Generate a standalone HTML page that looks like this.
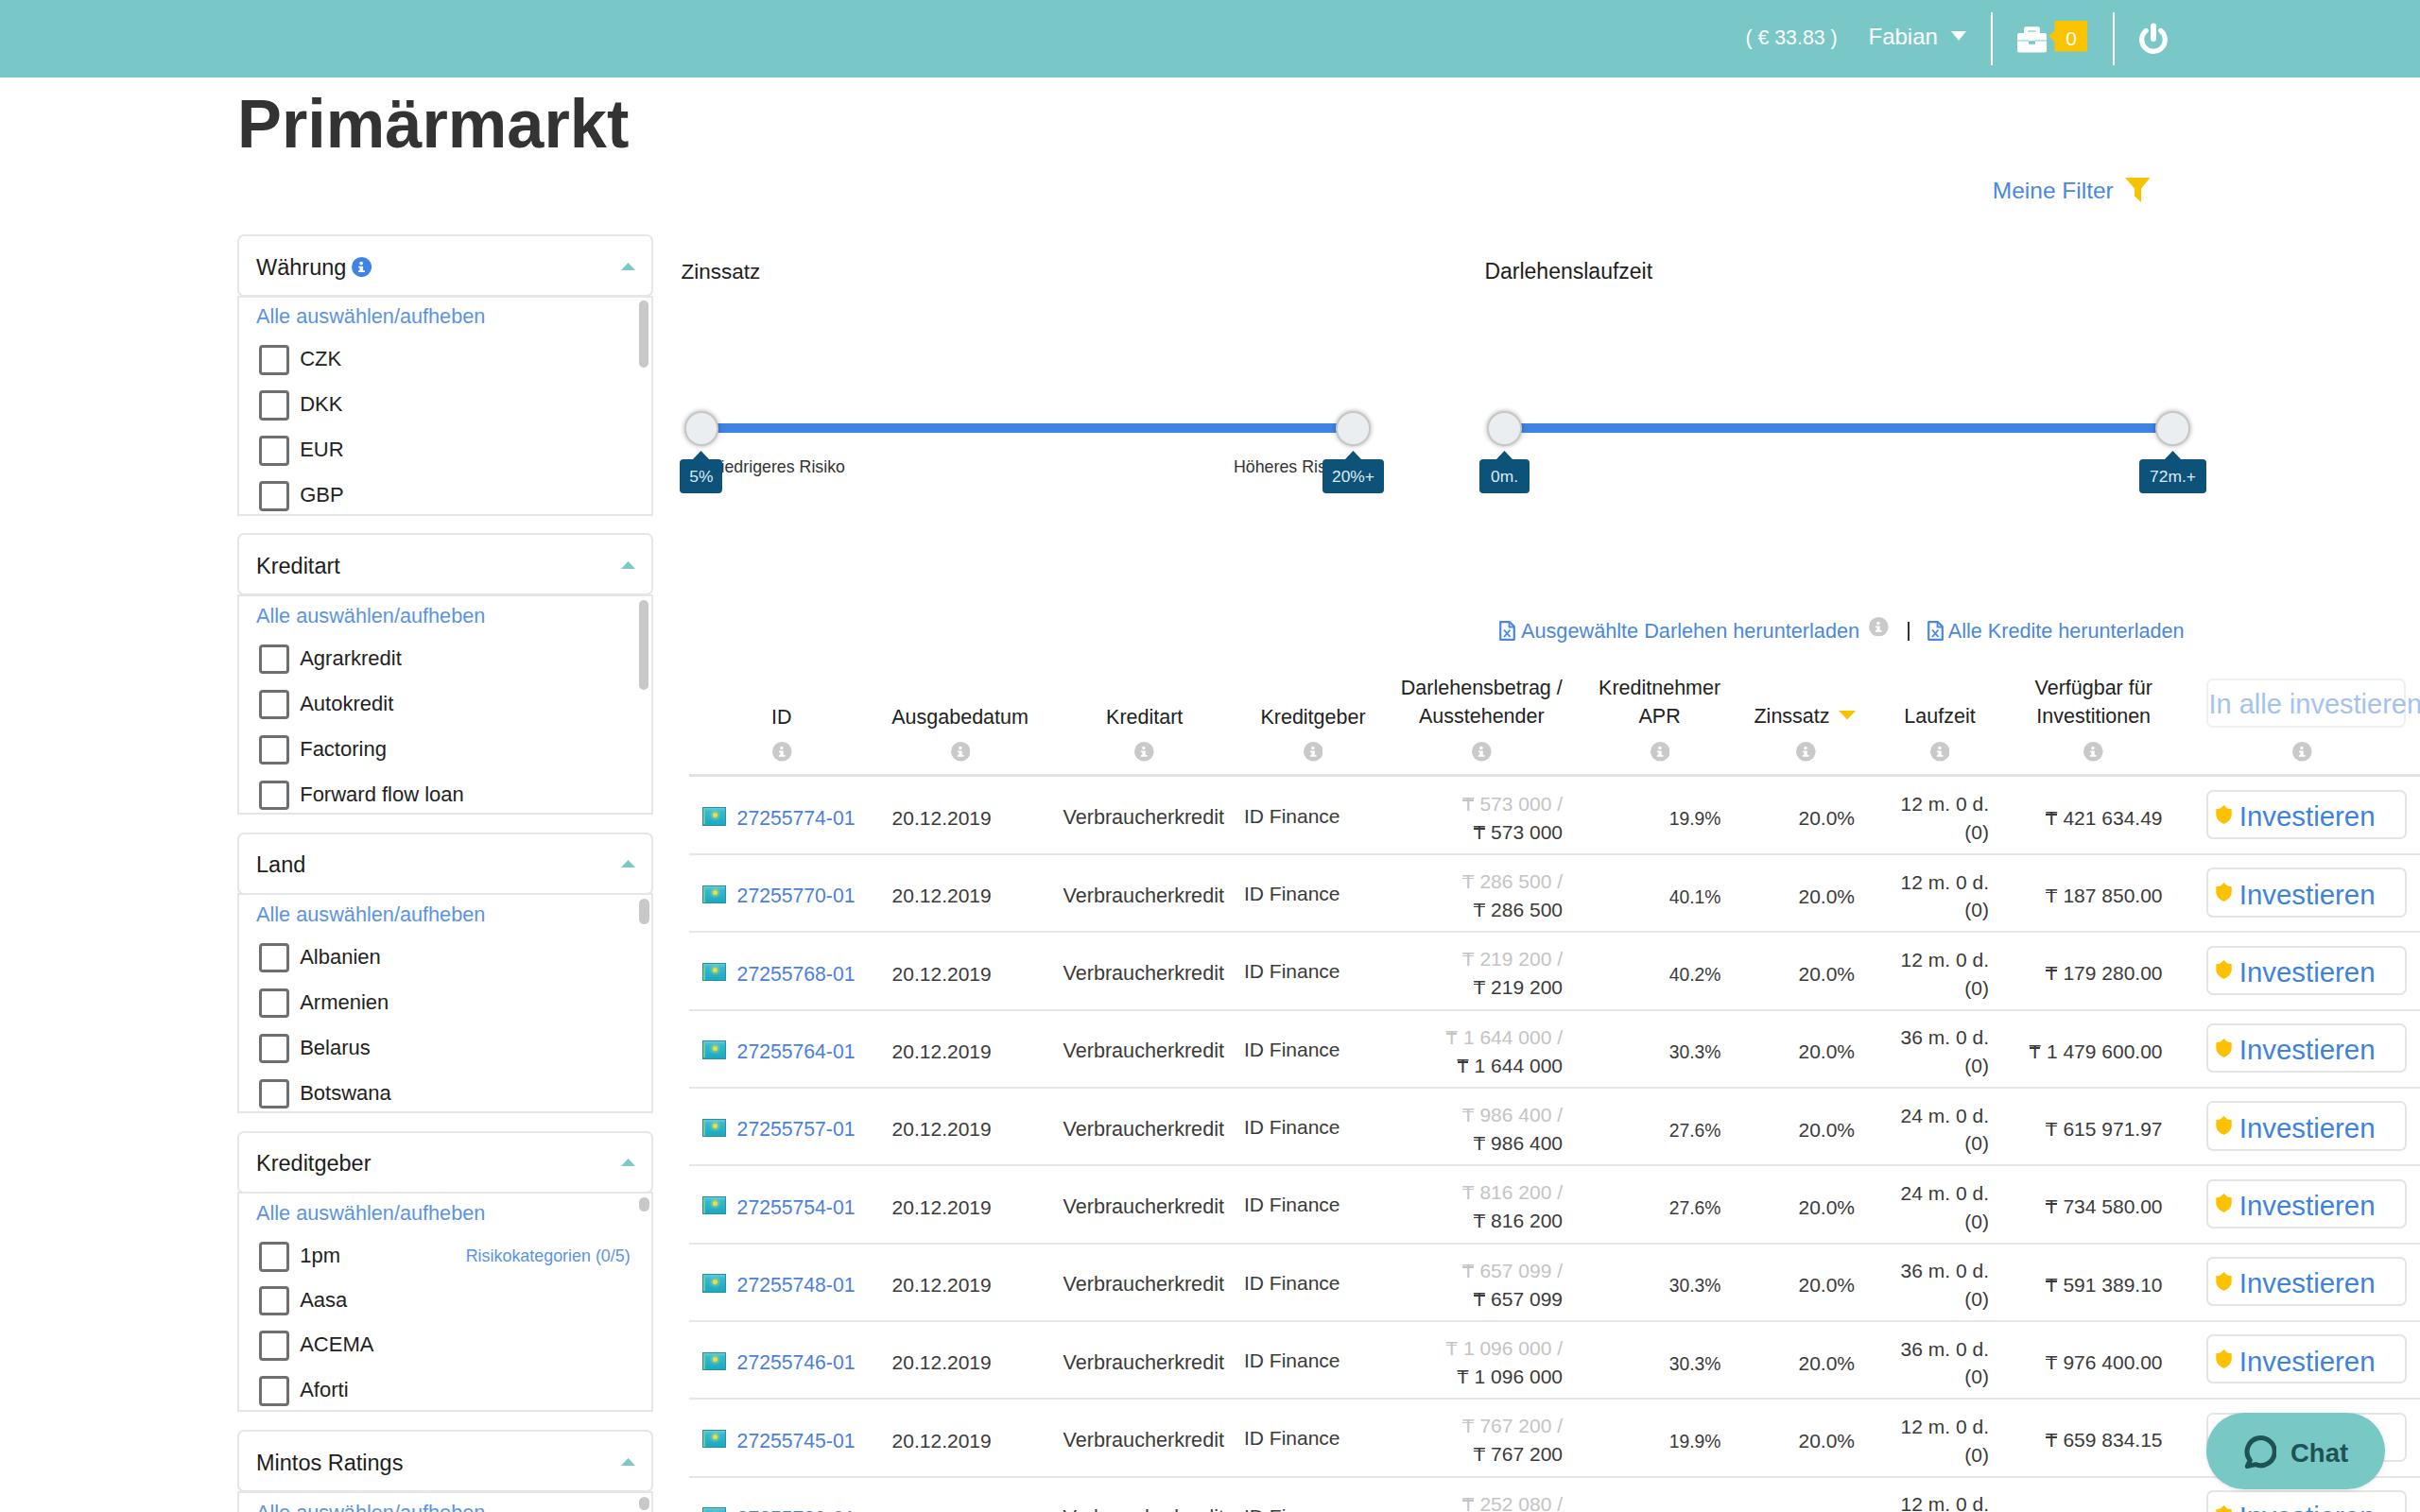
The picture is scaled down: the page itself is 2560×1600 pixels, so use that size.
<!DOCTYPE html>
<html><head><meta charset="utf-8"><title>Primärmarkt</title>
<style>
html,body{margin:0;padding:0;background:#fff;}
body{width:2560px;height:1600px;overflow:hidden;position:relative;font-family:"Liberation Sans",sans-serif;}
.a{position:absolute;}
.t{position:absolute;white-space:nowrap;}
.tg{position:relative;display:inline-block;}
.tg::after{content:"";position:absolute;left:0.03em;right:0.03em;top:0.41em;height:0.07em;background:currentColor;}
.info{position:absolute;width:20.5px;height:20.5px;border-radius:50%;background:#c9c9c9;}
.info::before{content:"";position:absolute;left:8.6px;top:4px;width:3.6px;height:3.6px;border-radius:50%;background:#fff;}
.info::after{content:"";position:absolute;left:8.2px;top:8.8px;width:4.2px;height:7.2px;background:#fff;border-radius:0.5px;}
.info.blue{background:#3f83e5;}
.knob{position:absolute;width:36.6px;height:36.6px;border-radius:50%;background:#ebeef0;box-sizing:border-box;border:2.5px solid #c4c8c8;box-shadow:0 0 4px 1px rgba(0,0,0,0.22);}
.flag{position:absolute;width:24.6px;height:19.6px;box-sizing:border-box;border:1.3px solid #2b8f9c;background:linear-gradient(#66c9e6 0,#33bad2 22%,#1aa8c2 100%);}
.flag::before{content:"";position:absolute;left:0.3px;top:0.5px;width:2px;bottom:0.5px;background:#6fc9a0;}
.flag::after{content:"";position:absolute;left:10px;top:4.6px;width:5px;height:5px;border-radius:50%;background:#eadc4a;box-shadow:0 0 3px 2px rgba(190,215,100,0.6);}
</style></head><body>
<div class="a" style="left:0px;top:0px;width:2560px;height:81.6px;background:#79c8c7;"></div>
<div class="t" style="top:27.22px;font-size:21.3px;line-height:26px;color:#ffffff;left:1846.5px;">( € 33.83 )</div>
<div class="t" style="top:23.68px;font-size:24px;line-height:29px;color:#ffffff;left:1976.5px;">Fabian</div>
<svg class="a" style="left:2064px;top:33px" width="16" height="11" viewBox="0 0 16 11"><path d="M0 0H16L8 10Z" fill="#fff"/></svg>
<div class="a" style="left:2106px;top:12.6px;width:2px;height:56.5px;background:#fff;"></div>
<div class="a" style="left:2235px;top:12.6px;width:2px;height:56.5px;background:#fff;"></div>
<svg class="a" style="left:2133px;top:28px" width="33" height="28" viewBox="0 0 33 28">
<path d="M8 7.5V2.5Q8 0.2 10.3 0.2H22.7Q25 0.2 25 2.5V7.5Z" fill="#fff"/><path d="M12.3 4.4H20.7V5.6H12.3Z" fill="#79c8c7"/>
<path d="M3 7H30Q32 7 32 9V14.4H20V15.2H13V14.4H1V9Q1 7 3 7Z" fill="#fff"/>
<path d="M1 15.5H13V18.8H20V15.5H32V25.5Q32 27.5 30 27.5H3Q1 27.5 1 25.5Z" fill="#fff"/>
</svg>
<svg class="a" style="left:2167px;top:21.7px" width="42" height="33" viewBox="0 0 42 33"><path d="M6.5 0H41V32.6H6.5V22L0 16.3L6.5 10.6Z" fill="#fcc400"/></svg>
<div class="t" style="top:28.22px;font-size:21px;line-height:25px;color:#ffffff;left:2191px;transform:translateX(-50%);">0</div>
<svg class="a" style="left:2260px;top:22px" width="36" height="36" viewBox="0 0 36 36">
<path d="M10.2 10.5A12.3 12.3 0 1 0 25.8 10.5" fill="none" stroke="#fff" stroke-width="5.2" stroke-linecap="round"/>
<path d="M18 5.5V19" stroke="#fff" stroke-width="6" stroke-linecap="round"/>
</svg>
<div class="t" style="top:86.76px;font-size:73.1px;line-height:88px;color:#333333;font-weight:700;left:250.5px;transform:scaleX(0.962);transform-origin:left top;">Primärmarkt</div>
<div class="t" style="top:187.31px;font-size:24.5px;line-height:29px;color:#4a87dd;left:2107.8px;">Meine Filter</div>
<svg class="a" style="left:2248px;top:188px" width="27" height="27" viewBox="0 0 27 27"><path d="M0 0H26.5L17 11.5V26L10 19.5V11.5Z" fill="#f6c300"/></svg>
<div class="a" style="left:251px;top:248px;width:440px;height:66px;border:2px solid #e6e6e6;border-radius:7px;box-sizing:border-box;"></div>
<div class="a" style="left:251px;top:312.5px;width:440px;height:233px;border:2px solid #e6e6e6;border-top-width:2px;box-sizing:border-box;background:#fff;"></div>
<div class="t" style="top:268.55px;font-size:23.5px;line-height:28px;color:#1d1d1d;left:271px;">Währung</div>
<svg class="a" style="left:371.50px;top:272.20px" width="21.1" height="21.1" viewBox="0 0 20.6 20.6"><circle cx="10.3" cy="10.3" r="10.3" fill="#3f83e8"/><circle cx="9.9" cy="6.5" r="1.75" fill="#fff"/><path d="M6.9 9.5H11.8V14H13.6V15.7H6.9V14H8.3V11H6.9Z" fill="#fff"/></svg>
<svg class="a" style="left:657px;top:277.5px" width="15" height="8" viewBox="0 0 15 8"><path d="M0 8L7.5 0L15 8Z" fill="#7cc8c6"/></svg>
<div class="t" style="top:322.48px;font-size:21.7px;line-height:26px;color:#5b93e3;left:271px;">Alle auswählen/aufheben</div>
<div class="a" style="left:675.5px;top:318.3px;width:10.5px;height:70.6px;background:#c8c8c8;border-radius:6px;"></div>
<div class="a" style="left:274px;top:365.3px;width:31.5px;height:31.5px;border:3px solid #6f6f6f;border-radius:4px;box-sizing:border-box;"></div>
<div class="t" style="top:367.47px;font-size:22px;line-height:26px;color:#222222;left:317.2px;">CZK</div>
<div class="a" style="left:274px;top:413.3px;width:31.5px;height:31.5px;border:3px solid #6f6f6f;border-radius:4px;box-sizing:border-box;"></div>
<div class="t" style="top:415.47px;font-size:22px;line-height:26px;color:#222222;left:317.2px;">DKK</div>
<div class="a" style="left:274px;top:461.3px;width:31.5px;height:31.5px;border:3px solid #6f6f6f;border-radius:4px;box-sizing:border-box;"></div>
<div class="t" style="top:463.47px;font-size:22px;line-height:26px;color:#222222;left:317.2px;">EUR</div>
<div class="a" style="left:274px;top:509.3px;width:31.5px;height:31.5px;border:3px solid #6f6f6f;border-radius:4px;box-sizing:border-box;"></div>
<div class="t" style="top:511.47px;font-size:22px;line-height:26px;color:#222222;left:317.2px;">GBP</div>
<div class="a" style="left:251px;top:564.3px;width:440px;height:66px;border:2px solid #e6e6e6;border-radius:7px;box-sizing:border-box;"></div>
<div class="a" style="left:251px;top:628.8px;width:440px;height:233px;border:2px solid #e6e6e6;border-top-width:2px;box-sizing:border-box;background:#fff;"></div>
<div class="t" style="top:584.85px;font-size:23.5px;line-height:28px;color:#1d1d1d;left:271px;">Kreditart</div>
<svg class="a" style="left:657px;top:593.8px" width="15" height="8" viewBox="0 0 15 8"><path d="M0 8L7.5 0L15 8Z" fill="#7cc8c6"/></svg>
<div class="t" style="top:638.78px;font-size:21.7px;line-height:26px;color:#5b93e3;left:271px;">Alle auswählen/aufheben</div>
<div class="a" style="left:675.5px;top:634.6999999999999px;width:10.5px;height:95.6px;background:#c8c8c8;border-radius:6px;"></div>
<div class="a" style="left:274px;top:681.5999999999999px;width:31.5px;height:31.5px;border:3px solid #6f6f6f;border-radius:4px;box-sizing:border-box;"></div>
<div class="t" style="top:683.77px;font-size:22px;line-height:26px;color:#222222;left:317.2px;">Agrarkredit</div>
<div class="a" style="left:274px;top:729.5999999999999px;width:31.5px;height:31.5px;border:3px solid #6f6f6f;border-radius:4px;box-sizing:border-box;"></div>
<div class="t" style="top:731.77px;font-size:22px;line-height:26px;color:#222222;left:317.2px;">Autokredit</div>
<div class="a" style="left:274px;top:777.5999999999999px;width:31.5px;height:31.5px;border:3px solid #6f6f6f;border-radius:4px;box-sizing:border-box;"></div>
<div class="t" style="top:779.77px;font-size:22px;line-height:26px;color:#222222;left:317.2px;">Factoring</div>
<div class="a" style="left:274px;top:825.5999999999999px;width:31.5px;height:31.5px;border:3px solid #6f6f6f;border-radius:4px;box-sizing:border-box;"></div>
<div class="t" style="top:827.77px;font-size:22px;line-height:26px;color:#222222;left:317.2px;">Forward flow loan</div>
<div class="a" style="left:251px;top:880.6px;width:440px;height:66px;border:2px solid #e6e6e6;border-radius:7px;box-sizing:border-box;"></div>
<div class="a" style="left:251px;top:945.1px;width:440px;height:233px;border:2px solid #e6e6e6;border-top-width:2px;box-sizing:border-box;background:#fff;"></div>
<div class="t" style="top:901.15px;font-size:23.5px;line-height:28px;color:#1d1d1d;left:271px;">Land</div>
<svg class="a" style="left:657px;top:910.1px" width="15" height="8" viewBox="0 0 15 8"><path d="M0 8L7.5 0L15 8Z" fill="#7cc8c6"/></svg>
<div class="t" style="top:955.08px;font-size:21.7px;line-height:26px;color:#5b93e3;left:271px;">Alle auswählen/aufheben</div>
<div class="a" style="left:675.5px;top:951.3000000000001px;width:11px;height:27px;background:#c8c8c8;border-radius:6px;"></div>
<div class="a" style="left:274px;top:997.9px;width:31.5px;height:31.5px;border:3px solid #6f6f6f;border-radius:4px;box-sizing:border-box;"></div>
<div class="t" style="top:1000.07px;font-size:22px;line-height:26px;color:#222222;left:317.2px;">Albanien</div>
<div class="a" style="left:274px;top:1045.9px;width:31.5px;height:31.5px;border:3px solid #6f6f6f;border-radius:4px;box-sizing:border-box;"></div>
<div class="t" style="top:1048.07px;font-size:22px;line-height:26px;color:#222222;left:317.2px;">Armenien</div>
<div class="a" style="left:274px;top:1093.9px;width:31.5px;height:31.5px;border:3px solid #6f6f6f;border-radius:4px;box-sizing:border-box;"></div>
<div class="t" style="top:1096.07px;font-size:22px;line-height:26px;color:#222222;left:317.2px;">Belarus</div>
<div class="a" style="left:274px;top:1141.9px;width:31.5px;height:31.5px;border:3px solid #6f6f6f;border-radius:4px;box-sizing:border-box;"></div>
<div class="t" style="top:1144.07px;font-size:22px;line-height:26px;color:#222222;left:317.2px;">Botswana</div>
<div class="a" style="left:251px;top:1196.9px;width:440px;height:66px;border:2px solid #e6e6e6;border-radius:7px;box-sizing:border-box;"></div>
<div class="a" style="left:251px;top:1261.4px;width:440px;height:233px;border:2px solid #e6e6e6;border-top-width:2px;box-sizing:border-box;background:#fff;"></div>
<div class="t" style="top:1217.45px;font-size:23.5px;line-height:28px;color:#1d1d1d;left:271px;">Kreditgeber</div>
<svg class="a" style="left:657px;top:1226.4px" width="15" height="8" viewBox="0 0 15 8"><path d="M0 8L7.5 0L15 8Z" fill="#7cc8c6"/></svg>
<div class="t" style="top:1271.38px;font-size:21.7px;line-height:26px;color:#5b93e3;left:271px;">Alle auswählen/aufheben</div>
<div class="a" style="left:675.5px;top:1267.4px;width:11px;height:14.5px;background:#c8c8c8;border-radius:6px;"></div>
<div class="a" style="left:274px;top:1314.2px;width:31.5px;height:31.5px;border:3px solid #6f6f6f;border-radius:4px;box-sizing:border-box;"></div>
<div class="t" style="top:1316.37px;font-size:22px;line-height:26px;color:#222222;left:317.2px;">1pm</div>
<div class="a" style="left:274px;top:1360.5px;width:31.5px;height:31.5px;border:3px solid #6f6f6f;border-radius:4px;box-sizing:border-box;"></div>
<div class="t" style="top:1362.67px;font-size:22px;line-height:26px;color:#222222;left:317.2px;">Aasa</div>
<div class="a" style="left:274px;top:1408.1000000000001px;width:31.5px;height:31.5px;border:3px solid #6f6f6f;border-radius:4px;box-sizing:border-box;"></div>
<div class="t" style="top:1410.27px;font-size:22px;line-height:26px;color:#222222;left:317.2px;">ACEMA</div>
<div class="a" style="left:274px;top:1456.3px;width:31.5px;height:31.5px;border:3px solid #6f6f6f;border-radius:4px;box-sizing:border-box;"></div>
<div class="t" style="top:1458.47px;font-size:22px;line-height:26px;color:#222222;left:317.2px;">Aforti</div>
<div class="t" style="top:1318.89px;font-size:17.9px;line-height:21px;color:#5b93e3;right:1893.3px;">Risikokategorien (0/5)</div>
<div class="a" style="left:251px;top:1513.2px;width:440px;height:66px;border:2px solid #e6e6e6;border-radius:7px;box-sizing:border-box;"></div>
<div class="a" style="left:251px;top:1577.7px;width:440px;height:233px;border:2px solid #e6e6e6;border-top-width:2px;box-sizing:border-box;background:#fff;"></div>
<div class="t" style="top:1533.75px;font-size:23.5px;line-height:28px;color:#1d1d1d;left:271px;">Mintos Ratings</div>
<svg class="a" style="left:657px;top:1542.7px" width="15" height="8" viewBox="0 0 15 8"><path d="M0 8L7.5 0L15 8Z" fill="#7cc8c6"/></svg>
<div class="t" style="top:1587.68px;font-size:21.7px;line-height:26px;color:#5b93e3;left:271px;">Alle auswählen/aufheben</div>
<div class="a" style="left:675.5px;top:1583.7px;width:11px;height:14.5px;background:#c8c8c8;border-radius:6px;"></div>
<div class="t" style="top:274.00px;font-size:22.5px;line-height:27px;color:#1d1d1d;left:720.5px;">Zinssatz</div>
<div class="t" style="top:273.33px;font-size:23px;line-height:28px;color:#1d1d1d;left:1570.4px;">Darlehenslaufzeit</div>
<div class="t" style="top:484.33px;font-size:17.8px;line-height:21px;color:#333333;left:749.7px;">Niedrigeres Risiko</div>
<div class="t" style="top:484.33px;font-size:17.8px;line-height:21px;color:#333333;left:1305px;">Höheres Risiko</div>
<div class="a" style="left:741.8px;top:448px;width:689.7px;height:10px;background:#3f83e5;"></div>
<div class="knob" style="left:723.5px;top:435.3px"></div>
<svg class="a" style="left:733.3px;top:477px" width="17" height="9" viewBox="0 0 17 9"><path d="M0 9L8.5 0L17 9Z" fill="#0d5279"/></svg>
<div class="a" style="left:719.4px;top:485.5px;width:44.8px;height:36.4px;background:#0d5279;border-radius:4px;"></div>
<div class="t" style="top:494.27px;font-size:17.4px;line-height:21px;color:#dcebf7;left:741.8px;transform:translateX(-50%);">5%</div>
<div class="knob" style="left:1413.2px;top:435.3px"></div>
<svg class="a" style="left:1423.0px;top:477px" width="17" height="9" viewBox="0 0 17 9"><path d="M0 9L8.5 0L17 9Z" fill="#0d5279"/></svg>
<div class="a" style="left:1398.7px;top:485.5px;width:65.6px;height:36.4px;background:#0d5279;border-radius:4px;"></div>
<div class="t" style="top:494.27px;font-size:17.4px;line-height:21px;color:#dcebf7;left:1431.5px;transform:translateX(-50%);">20%+</div>
<div class="a" style="left:1591.5px;top:448px;width:707.0px;height:10px;background:#3f83e5;"></div>
<div class="knob" style="left:1573.2px;top:435.3px"></div>
<svg class="a" style="left:1583.0px;top:477px" width="17" height="9" viewBox="0 0 17 9"><path d="M0 9L8.5 0L17 9Z" fill="#0d5279"/></svg>
<div class="a" style="left:1564.65px;top:485.5px;width:53.7px;height:36.4px;background:#0d5279;border-radius:4px;"></div>
<div class="t" style="top:494.27px;font-size:17.4px;line-height:21px;color:#dcebf7;left:1591.5px;transform:translateX(-50%);">0m.</div>
<div class="knob" style="left:2280.2px;top:435.3px"></div>
<svg class="a" style="left:2290.0px;top:477px" width="17" height="9" viewBox="0 0 17 9"><path d="M0 9L8.5 0L17 9Z" fill="#0d5279"/></svg>
<div class="a" style="left:2263.15px;top:485.5px;width:70.7px;height:36.4px;background:#0d5279;border-radius:4px;"></div>
<div class="t" style="top:494.27px;font-size:17.4px;line-height:21px;color:#dcebf7;left:2298.5px;transform:translateX(-50%);">72m.+</div>
<svg class="a" style="left:1586px;top:656.5px" width="17" height="21" viewBox="0 0 17 21">
<path d="M1.2 1.2H11L15.8 6V19.8H1.2Z" fill="none" stroke="#4a87dd" stroke-width="2.2" stroke-linejoin="round"/>
<path d="M10.5 1.5V6.5H15.5" fill="none" stroke="#4a87dd" stroke-width="1.8"/>
<path d="M5 9.5L11.5 17M11.5 9.5L5 17" stroke="#4a87dd" stroke-width="1.9"/></svg>
<div class="t" style="top:654.88px;font-size:21.7px;line-height:26px;color:#4a87dd;left:1609px;">Ausgewählte Darlehen herunterladen</div>
<svg class="a" style="left:1977.20px;top:652.80px" width="20.6" height="20.6" viewBox="0 0 20.6 20.6"><circle cx="10.3" cy="10.3" r="10.3" fill="#c9c9c9"/><circle cx="9.9" cy="6.5" r="1.75" fill="#fff"/><path d="M6.9 9.5H11.8V14H13.6V15.7H6.9V14H8.3V11H6.9Z" fill="#fff"/></svg>
<div class="a" style="left:2017.5px;top:658px;width:2px;height:20px;background:#333;"></div>
<svg class="a" style="left:2039.3px;top:656.5px" width="17" height="21" viewBox="0 0 17 21">
<path d="M1.2 1.2H11L15.8 6V19.8H1.2Z" fill="none" stroke="#4a87dd" stroke-width="2.2" stroke-linejoin="round"/>
<path d="M10.5 1.5V6.5H15.5" fill="none" stroke="#4a87dd" stroke-width="1.8"/>
<path d="M5 9.5L11.5 17M11.5 9.5L5 17" stroke="#4a87dd" stroke-width="1.9"/></svg>
<div class="t" style="top:654.91px;font-size:21.6px;line-height:26px;color:#4a87dd;left:2060.8px;">Alle Kredite herunterladen</div>
<div class="t" style="top:745.95px;font-size:21.5px;line-height:26px;color:#222222;left:826.8px;transform:translateX(-50%);">ID</div>
<svg class="a" style="left:817.00px;top:785.00px" width="20.6" height="20.6" viewBox="0 0 20.6 20.6"><circle cx="10.3" cy="10.3" r="10.3" fill="#c9c9c9"/><circle cx="9.9" cy="6.5" r="1.75" fill="#fff"/><path d="M6.9 9.5H11.8V14H13.6V15.7H6.9V14H8.3V11H6.9Z" fill="#fff"/></svg>
<div class="t" style="top:745.95px;font-size:21.5px;line-height:26px;color:#222222;left:1015.6px;transform:translateX(-50%);">Ausgabedatum</div>
<svg class="a" style="left:1005.60px;top:785.00px" width="20.6" height="20.6" viewBox="0 0 20.6 20.6"><circle cx="10.3" cy="10.3" r="10.3" fill="#c9c9c9"/><circle cx="9.9" cy="6.5" r="1.75" fill="#fff"/><path d="M6.9 9.5H11.8V14H13.6V15.7H6.9V14H8.3V11H6.9Z" fill="#fff"/></svg>
<div class="t" style="top:745.95px;font-size:21.5px;line-height:26px;color:#222222;left:1210.7px;transform:translateX(-50%);">Kreditart</div>
<svg class="a" style="left:1200.30px;top:785.00px" width="20.6" height="20.6" viewBox="0 0 20.6 20.6"><circle cx="10.3" cy="10.3" r="10.3" fill="#c9c9c9"/><circle cx="9.9" cy="6.5" r="1.75" fill="#fff"/><path d="M6.9 9.5H11.8V14H13.6V15.7H6.9V14H8.3V11H6.9Z" fill="#fff"/></svg>
<div class="t" style="top:745.95px;font-size:21.5px;line-height:26px;color:#222222;left:1389px;transform:translateX(-50%);">Kreditgeber</div>
<svg class="a" style="left:1378.70px;top:785.00px" width="20.6" height="20.6" viewBox="0 0 20.6 20.6"><circle cx="10.3" cy="10.3" r="10.3" fill="#c9c9c9"/><circle cx="9.9" cy="6.5" r="1.75" fill="#fff"/><path d="M6.9 9.5H11.8V14H13.6V15.7H6.9V14H8.3V11H6.9Z" fill="#fff"/></svg>
<div class="t" style="top:715.35px;font-size:21.5px;line-height:26px;color:#222222;left:1567.3px;transform:translateX(-50%);">Darlehensbetrag /</div>
<div class="t" style="top:745.45px;font-size:21.5px;line-height:26px;color:#222222;left:1567.3px;transform:translateX(-50%);">Ausstehender</div>
<svg class="a" style="left:1557.30px;top:785.00px" width="20.6" height="20.6" viewBox="0 0 20.6 20.6"><circle cx="10.3" cy="10.3" r="10.3" fill="#c9c9c9"/><circle cx="9.9" cy="6.5" r="1.75" fill="#fff"/><path d="M6.9 9.5H11.8V14H13.6V15.7H6.9V14H8.3V11H6.9Z" fill="#fff"/></svg>
<div class="t" style="top:715.35px;font-size:21.5px;line-height:26px;color:#222222;left:1755.6px;transform:translateX(-50%);">Kreditnehmer</div>
<div class="t" style="top:745.45px;font-size:21.5px;line-height:26px;color:#222222;left:1755.6px;transform:translateX(-50%);">APR</div>
<svg class="a" style="left:1745.70px;top:785.00px" width="20.6" height="20.6" viewBox="0 0 20.6 20.6"><circle cx="10.3" cy="10.3" r="10.3" fill="#c9c9c9"/><circle cx="9.9" cy="6.5" r="1.75" fill="#fff"/><path d="M6.9 9.5H11.8V14H13.6V15.7H6.9V14H8.3V11H6.9Z" fill="#fff"/></svg>
<div class="t" style="top:745.45px;font-size:21.5px;line-height:26px;color:#222222;left:1895.5px;transform:translateX(-50%);">Zinssatz</div>
<svg class="a" style="left:1900.10px;top:785.00px" width="20.6" height="20.6" viewBox="0 0 20.6 20.6"><circle cx="10.3" cy="10.3" r="10.3" fill="#c9c9c9"/><circle cx="9.9" cy="6.5" r="1.75" fill="#fff"/><path d="M6.9 9.5H11.8V14H13.6V15.7H6.9V14H8.3V11H6.9Z" fill="#fff"/></svg>
<div class="t" style="top:745.45px;font-size:21.5px;line-height:26px;color:#222222;left:2052px;transform:translateX(-50%);">Laufzeit</div>
<svg class="a" style="left:2041.70px;top:785.00px" width="20.6" height="20.6" viewBox="0 0 20.6 20.6"><circle cx="10.3" cy="10.3" r="10.3" fill="#c9c9c9"/><circle cx="9.9" cy="6.5" r="1.75" fill="#fff"/><path d="M6.9 9.5H11.8V14H13.6V15.7H6.9V14H8.3V11H6.9Z" fill="#fff"/></svg>
<div class="t" style="top:715.35px;font-size:21.5px;line-height:26px;color:#222222;left:2214.7px;transform:translateX(-50%);">Verfügbar für</div>
<div class="t" style="top:745.45px;font-size:21.5px;line-height:26px;color:#222222;left:2214.7px;transform:translateX(-50%);">Investitionen</div>
<svg class="a" style="left:2204.10px;top:785.00px" width="20.6" height="20.6" viewBox="0 0 20.6 20.6"><circle cx="10.3" cy="10.3" r="10.3" fill="#c9c9c9"/><circle cx="9.9" cy="6.5" r="1.75" fill="#fff"/><path d="M6.9 9.5H11.8V14H13.6V15.7H6.9V14H8.3V11H6.9Z" fill="#fff"/></svg>
<svg class="a" style="left:1945px;top:752px" width="18" height="10" viewBox="0 0 18 10"><path d="M0 0H18L9 9.5Z" fill="#f6c300"/></svg>
<div class="a" style="left:2333.7px;top:718px;width:211.8px;height:52.4px;border:2px solid #efefef;border-radius:7px;box-sizing:border-box;"></div>
<div class="t" style="top:728.05px;font-size:29px;line-height:35px;color:#a3c3ee;left:2336.4px;">In alle investieren</div>
<svg class="a" style="left:2425.10px;top:785.00px" width="20.6" height="20.6" viewBox="0 0 20.6 20.6"><circle cx="10.3" cy="10.3" r="10.3" fill="#c9c9c9"/><circle cx="9.9" cy="6.5" r="1.75" fill="#fff"/><path d="M6.9 9.5H11.8V14H13.6V15.7H6.9V14H8.3V11H6.9Z" fill="#fff"/></svg>
<div class="a" style="left:729px;top:819px;width:1831px;height:3px;background:#e2e2e2;"></div>
<div class="flag" style="left:743.2px;top:854.20px"></div>
<div class="t" style="top:852.95px;font-size:21.2px;line-height:25px;color:#4a7fde;left:779.6px;">27255774-01</div>
<div class="t" style="top:853.02px;font-size:21px;line-height:25px;color:#3a3a3a;left:943.6px;">20.12.2019</div>
<div class="t" style="top:852.31px;font-size:21.6px;line-height:26px;color:#3a3a3a;left:1124.5px;">Verbraucherkredit</div>
<div class="t" style="top:850.82px;font-size:21px;line-height:25px;color:#3a3a3a;left:1316px;">ID Finance</div>
<div class="t" style="top:837.62px;font-size:21px;line-height:25px;color:#c4c4c4;right:907px;"><span class="tg">T</span> 573 000 /</div>
<div class="t" style="top:867.72px;font-size:21px;line-height:25px;color:#3a3a3a;right:907px;"><span class="tg">T</span> 573 000</div>
<div class="t" style="top:853.22px;font-size:21px;line-height:25px;color:#3a3a3a;right:739.5999999999999px;transform:scaleX(0.92);transform-origin:right top;">19.9%</div>
<div class="t" style="top:853.22px;font-size:21px;line-height:25px;color:#3a3a3a;right:598px;">20.0%</div>
<div class="t" style="top:838.42px;font-size:21px;line-height:25px;color:#3a3a3a;right:456px;">12 m. 0 d.</div>
<div class="t" style="top:867.92px;font-size:21px;line-height:25px;color:#3a3a3a;right:456px;">(0)</div>
<div class="t" style="top:852.82px;font-size:21px;line-height:25px;color:#3a3a3a;right:272.5px;"><span class="tg">T</span> 421 634.49</div>
<div class="a" style="left:2333.7px;top:836.0px;width:212px;height:52.2px;border:2px solid #e4e4e4;border-radius:7px;box-sizing:border-box;background:#fff;"></div>
<svg class="a" style="left:2344px;top:851.70px" width="17" height="20" viewBox="0 0 17 20"><path d="M8.5 0L12.3 3.4L16.7 4.2V10.5Q16.7 16 8.5 20Q0.3 16 0.3 10.5V4.2L4.7 3.4Z" fill="#fcc200"/></svg>
<div class="t" style="top:846.31px;font-size:29.4px;line-height:35px;color:#3d82e0;left:2368.8px;">Investieren</div>
<div class="a" style="left:729px;top:903.0px;width:1831px;height:2px;background:#e6e6e6;"></div>
<div class="flag" style="left:743.2px;top:936.53px"></div>
<div class="t" style="top:935.28px;font-size:21.2px;line-height:25px;color:#4a7fde;left:779.6px;">27255770-01</div>
<div class="t" style="top:935.35px;font-size:21px;line-height:25px;color:#3a3a3a;left:943.6px;">20.12.2019</div>
<div class="t" style="top:934.64px;font-size:21.6px;line-height:26px;color:#3a3a3a;left:1124.5px;">Verbraucherkredit</div>
<div class="t" style="top:933.15px;font-size:21px;line-height:25px;color:#3a3a3a;left:1316px;">ID Finance</div>
<div class="t" style="top:919.95px;font-size:21px;line-height:25px;color:#c4c4c4;right:907px;"><span class="tg">T</span> 286 500 /</div>
<div class="t" style="top:950.05px;font-size:21px;line-height:25px;color:#3a3a3a;right:907px;"><span class="tg">T</span> 286 500</div>
<div class="t" style="top:935.55px;font-size:21px;line-height:25px;color:#3a3a3a;right:739.5999999999999px;transform:scaleX(0.92);transform-origin:right top;">40.1%</div>
<div class="t" style="top:935.55px;font-size:21px;line-height:25px;color:#3a3a3a;right:598px;">20.0%</div>
<div class="t" style="top:920.75px;font-size:21px;line-height:25px;color:#3a3a3a;right:456px;">12 m. 0 d.</div>
<div class="t" style="top:950.25px;font-size:21px;line-height:25px;color:#3a3a3a;right:456px;">(0)</div>
<div class="t" style="top:935.15px;font-size:21px;line-height:25px;color:#3a3a3a;right:272.5px;"><span class="tg">T</span> 187 850.00</div>
<div class="a" style="left:2333.7px;top:918.33px;width:212px;height:52.2px;border:2px solid #e4e4e4;border-radius:7px;box-sizing:border-box;background:#fff;"></div>
<svg class="a" style="left:2344px;top:934.03px" width="17" height="20" viewBox="0 0 17 20"><path d="M8.5 0L12.3 3.4L16.7 4.2V10.5Q16.7 16 8.5 20Q0.3 16 0.3 10.5V4.2L4.7 3.4Z" fill="#fcc200"/></svg>
<div class="t" style="top:928.64px;font-size:29.4px;line-height:35px;color:#3d82e0;left:2368.8px;">Investieren</div>
<div class="a" style="left:729px;top:985.33px;width:1831px;height:2px;background:#e6e6e6;"></div>
<div class="flag" style="left:743.2px;top:1018.86px"></div>
<div class="t" style="top:1017.61px;font-size:21.2px;line-height:25px;color:#4a7fde;left:779.6px;">27255768-01</div>
<div class="t" style="top:1017.68px;font-size:21px;line-height:25px;color:#3a3a3a;left:943.6px;">20.12.2019</div>
<div class="t" style="top:1016.97px;font-size:21.6px;line-height:26px;color:#3a3a3a;left:1124.5px;">Verbraucherkredit</div>
<div class="t" style="top:1015.48px;font-size:21px;line-height:25px;color:#3a3a3a;left:1316px;">ID Finance</div>
<div class="t" style="top:1002.28px;font-size:21px;line-height:25px;color:#c4c4c4;right:907px;"><span class="tg">T</span> 219 200 /</div>
<div class="t" style="top:1032.38px;font-size:21px;line-height:25px;color:#3a3a3a;right:907px;"><span class="tg">T</span> 219 200</div>
<div class="t" style="top:1017.88px;font-size:21px;line-height:25px;color:#3a3a3a;right:739.5999999999999px;transform:scaleX(0.92);transform-origin:right top;">40.2%</div>
<div class="t" style="top:1017.88px;font-size:21px;line-height:25px;color:#3a3a3a;right:598px;">20.0%</div>
<div class="t" style="top:1003.08px;font-size:21px;line-height:25px;color:#3a3a3a;right:456px;">12 m. 0 d.</div>
<div class="t" style="top:1032.58px;font-size:21px;line-height:25px;color:#3a3a3a;right:456px;">(0)</div>
<div class="t" style="top:1017.48px;font-size:21px;line-height:25px;color:#3a3a3a;right:272.5px;"><span class="tg">T</span> 179 280.00</div>
<div class="a" style="left:2333.7px;top:1000.66px;width:212px;height:52.2px;border:2px solid #e4e4e4;border-radius:7px;box-sizing:border-box;background:#fff;"></div>
<svg class="a" style="left:2344px;top:1016.36px" width="17" height="20" viewBox="0 0 17 20"><path d="M8.5 0L12.3 3.4L16.7 4.2V10.5Q16.7 16 8.5 20Q0.3 16 0.3 10.5V4.2L4.7 3.4Z" fill="#fcc200"/></svg>
<div class="t" style="top:1010.97px;font-size:29.4px;line-height:35px;color:#3d82e0;left:2368.8px;">Investieren</div>
<div class="a" style="left:729px;top:1067.66px;width:1831px;height:2px;background:#e6e6e6;"></div>
<div class="flag" style="left:743.2px;top:1101.19px"></div>
<div class="t" style="top:1099.94px;font-size:21.2px;line-height:25px;color:#4a7fde;left:779.6px;">27255764-01</div>
<div class="t" style="top:1100.01px;font-size:21px;line-height:25px;color:#3a3a3a;left:943.6px;">20.12.2019</div>
<div class="t" style="top:1099.30px;font-size:21.6px;line-height:26px;color:#3a3a3a;left:1124.5px;">Verbraucherkredit</div>
<div class="t" style="top:1097.81px;font-size:21px;line-height:25px;color:#3a3a3a;left:1316px;">ID Finance</div>
<div class="t" style="top:1084.61px;font-size:21px;line-height:25px;color:#c4c4c4;right:907px;"><span class="tg">T</span> 1 644 000 /</div>
<div class="t" style="top:1114.71px;font-size:21px;line-height:25px;color:#3a3a3a;right:907px;"><span class="tg">T</span> 1 644 000</div>
<div class="t" style="top:1100.21px;font-size:21px;line-height:25px;color:#3a3a3a;right:739.5999999999999px;transform:scaleX(0.92);transform-origin:right top;">30.3%</div>
<div class="t" style="top:1100.21px;font-size:21px;line-height:25px;color:#3a3a3a;right:598px;">20.0%</div>
<div class="t" style="top:1085.41px;font-size:21px;line-height:25px;color:#3a3a3a;right:456px;">36 m. 0 d.</div>
<div class="t" style="top:1114.91px;font-size:21px;line-height:25px;color:#3a3a3a;right:456px;">(0)</div>
<div class="t" style="top:1099.81px;font-size:21px;line-height:25px;color:#3a3a3a;right:272.5px;"><span class="tg">T</span> 1 479 600.00</div>
<div class="a" style="left:2333.7px;top:1082.99px;width:212px;height:52.2px;border:2px solid #e4e4e4;border-radius:7px;box-sizing:border-box;background:#fff;"></div>
<svg class="a" style="left:2344px;top:1098.69px" width="17" height="20" viewBox="0 0 17 20"><path d="M8.5 0L12.3 3.4L16.7 4.2V10.5Q16.7 16 8.5 20Q0.3 16 0.3 10.5V4.2L4.7 3.4Z" fill="#fcc200"/></svg>
<div class="t" style="top:1093.30px;font-size:29.4px;line-height:35px;color:#3d82e0;left:2368.8px;">Investieren</div>
<div class="a" style="left:729px;top:1149.99px;width:1831px;height:2px;background:#e6e6e6;"></div>
<div class="flag" style="left:743.2px;top:1183.52px"></div>
<div class="t" style="top:1182.27px;font-size:21.2px;line-height:25px;color:#4a7fde;left:779.6px;">27255757-01</div>
<div class="t" style="top:1182.34px;font-size:21px;line-height:25px;color:#3a3a3a;left:943.6px;">20.12.2019</div>
<div class="t" style="top:1181.63px;font-size:21.6px;line-height:26px;color:#3a3a3a;left:1124.5px;">Verbraucherkredit</div>
<div class="t" style="top:1180.14px;font-size:21px;line-height:25px;color:#3a3a3a;left:1316px;">ID Finance</div>
<div class="t" style="top:1166.94px;font-size:21px;line-height:25px;color:#c4c4c4;right:907px;"><span class="tg">T</span> 986 400 /</div>
<div class="t" style="top:1197.04px;font-size:21px;line-height:25px;color:#3a3a3a;right:907px;"><span class="tg">T</span> 986 400</div>
<div class="t" style="top:1182.54px;font-size:21px;line-height:25px;color:#3a3a3a;right:739.5999999999999px;transform:scaleX(0.92);transform-origin:right top;">27.6%</div>
<div class="t" style="top:1182.54px;font-size:21px;line-height:25px;color:#3a3a3a;right:598px;">20.0%</div>
<div class="t" style="top:1167.74px;font-size:21px;line-height:25px;color:#3a3a3a;right:456px;">24 m. 0 d.</div>
<div class="t" style="top:1197.24px;font-size:21px;line-height:25px;color:#3a3a3a;right:456px;">(0)</div>
<div class="t" style="top:1182.14px;font-size:21px;line-height:25px;color:#3a3a3a;right:272.5px;"><span class="tg">T</span> 615 971.97</div>
<div class="a" style="left:2333.7px;top:1165.32px;width:212px;height:52.2px;border:2px solid #e4e4e4;border-radius:7px;box-sizing:border-box;background:#fff;"></div>
<svg class="a" style="left:2344px;top:1181.02px" width="17" height="20" viewBox="0 0 17 20"><path d="M8.5 0L12.3 3.4L16.7 4.2V10.5Q16.7 16 8.5 20Q0.3 16 0.3 10.5V4.2L4.7 3.4Z" fill="#fcc200"/></svg>
<div class="t" style="top:1175.63px;font-size:29.4px;line-height:35px;color:#3d82e0;left:2368.8px;">Investieren</div>
<div class="a" style="left:729px;top:1232.32px;width:1831px;height:2px;background:#e6e6e6;"></div>
<div class="flag" style="left:743.2px;top:1265.85px"></div>
<div class="t" style="top:1264.60px;font-size:21.2px;line-height:25px;color:#4a7fde;left:779.6px;">27255754-01</div>
<div class="t" style="top:1264.67px;font-size:21px;line-height:25px;color:#3a3a3a;left:943.6px;">20.12.2019</div>
<div class="t" style="top:1263.96px;font-size:21.6px;line-height:26px;color:#3a3a3a;left:1124.5px;">Verbraucherkredit</div>
<div class="t" style="top:1262.47px;font-size:21px;line-height:25px;color:#3a3a3a;left:1316px;">ID Finance</div>
<div class="t" style="top:1249.27px;font-size:21px;line-height:25px;color:#c4c4c4;right:907px;"><span class="tg">T</span> 816 200 /</div>
<div class="t" style="top:1279.37px;font-size:21px;line-height:25px;color:#3a3a3a;right:907px;"><span class="tg">T</span> 816 200</div>
<div class="t" style="top:1264.87px;font-size:21px;line-height:25px;color:#3a3a3a;right:739.5999999999999px;transform:scaleX(0.92);transform-origin:right top;">27.6%</div>
<div class="t" style="top:1264.87px;font-size:21px;line-height:25px;color:#3a3a3a;right:598px;">20.0%</div>
<div class="t" style="top:1250.07px;font-size:21px;line-height:25px;color:#3a3a3a;right:456px;">24 m. 0 d.</div>
<div class="t" style="top:1279.57px;font-size:21px;line-height:25px;color:#3a3a3a;right:456px;">(0)</div>
<div class="t" style="top:1264.47px;font-size:21px;line-height:25px;color:#3a3a3a;right:272.5px;"><span class="tg">T</span> 734 580.00</div>
<div class="a" style="left:2333.7px;top:1247.65px;width:212px;height:52.2px;border:2px solid #e4e4e4;border-radius:7px;box-sizing:border-box;background:#fff;"></div>
<svg class="a" style="left:2344px;top:1263.35px" width="17" height="20" viewBox="0 0 17 20"><path d="M8.5 0L12.3 3.4L16.7 4.2V10.5Q16.7 16 8.5 20Q0.3 16 0.3 10.5V4.2L4.7 3.4Z" fill="#fcc200"/></svg>
<div class="t" style="top:1257.96px;font-size:29.4px;line-height:35px;color:#3d82e0;left:2368.8px;">Investieren</div>
<div class="a" style="left:729px;top:1314.65px;width:1831px;height:2px;background:#e6e6e6;"></div>
<div class="flag" style="left:743.2px;top:1348.18px"></div>
<div class="t" style="top:1346.93px;font-size:21.2px;line-height:25px;color:#4a7fde;left:779.6px;">27255748-01</div>
<div class="t" style="top:1347.00px;font-size:21px;line-height:25px;color:#3a3a3a;left:943.6px;">20.12.2019</div>
<div class="t" style="top:1346.29px;font-size:21.6px;line-height:26px;color:#3a3a3a;left:1124.5px;">Verbraucherkredit</div>
<div class="t" style="top:1344.80px;font-size:21px;line-height:25px;color:#3a3a3a;left:1316px;">ID Finance</div>
<div class="t" style="top:1331.60px;font-size:21px;line-height:25px;color:#c4c4c4;right:907px;"><span class="tg">T</span> 657 099 /</div>
<div class="t" style="top:1361.70px;font-size:21px;line-height:25px;color:#3a3a3a;right:907px;"><span class="tg">T</span> 657 099</div>
<div class="t" style="top:1347.20px;font-size:21px;line-height:25px;color:#3a3a3a;right:739.5999999999999px;transform:scaleX(0.92);transform-origin:right top;">30.3%</div>
<div class="t" style="top:1347.20px;font-size:21px;line-height:25px;color:#3a3a3a;right:598px;">20.0%</div>
<div class="t" style="top:1332.40px;font-size:21px;line-height:25px;color:#3a3a3a;right:456px;">36 m. 0 d.</div>
<div class="t" style="top:1361.90px;font-size:21px;line-height:25px;color:#3a3a3a;right:456px;">(0)</div>
<div class="t" style="top:1346.80px;font-size:21px;line-height:25px;color:#3a3a3a;right:272.5px;"><span class="tg">T</span> 591 389.10</div>
<div class="a" style="left:2333.7px;top:1329.98px;width:212px;height:52.2px;border:2px solid #e4e4e4;border-radius:7px;box-sizing:border-box;background:#fff;"></div>
<svg class="a" style="left:2344px;top:1345.68px" width="17" height="20" viewBox="0 0 17 20"><path d="M8.5 0L12.3 3.4L16.7 4.2V10.5Q16.7 16 8.5 20Q0.3 16 0.3 10.5V4.2L4.7 3.4Z" fill="#fcc200"/></svg>
<div class="t" style="top:1340.29px;font-size:29.4px;line-height:35px;color:#3d82e0;left:2368.8px;">Investieren</div>
<div class="a" style="left:729px;top:1396.98px;width:1831px;height:2px;background:#e6e6e6;"></div>
<div class="flag" style="left:743.2px;top:1430.51px"></div>
<div class="t" style="top:1429.26px;font-size:21.2px;line-height:25px;color:#4a7fde;left:779.6px;">27255746-01</div>
<div class="t" style="top:1429.33px;font-size:21px;line-height:25px;color:#3a3a3a;left:943.6px;">20.12.2019</div>
<div class="t" style="top:1428.62px;font-size:21.6px;line-height:26px;color:#3a3a3a;left:1124.5px;">Verbraucherkredit</div>
<div class="t" style="top:1427.13px;font-size:21px;line-height:25px;color:#3a3a3a;left:1316px;">ID Finance</div>
<div class="t" style="top:1413.93px;font-size:21px;line-height:25px;color:#c4c4c4;right:907px;"><span class="tg">T</span> 1 096 000 /</div>
<div class="t" style="top:1444.03px;font-size:21px;line-height:25px;color:#3a3a3a;right:907px;"><span class="tg">T</span> 1 096 000</div>
<div class="t" style="top:1429.53px;font-size:21px;line-height:25px;color:#3a3a3a;right:739.5999999999999px;transform:scaleX(0.92);transform-origin:right top;">30.3%</div>
<div class="t" style="top:1429.53px;font-size:21px;line-height:25px;color:#3a3a3a;right:598px;">20.0%</div>
<div class="t" style="top:1414.73px;font-size:21px;line-height:25px;color:#3a3a3a;right:456px;">36 m. 0 d.</div>
<div class="t" style="top:1444.23px;font-size:21px;line-height:25px;color:#3a3a3a;right:456px;">(0)</div>
<div class="t" style="top:1429.13px;font-size:21px;line-height:25px;color:#3a3a3a;right:272.5px;"><span class="tg">T</span> 976 400.00</div>
<div class="a" style="left:2333.7px;top:1412.31px;width:212px;height:52.2px;border:2px solid #e4e4e4;border-radius:7px;box-sizing:border-box;background:#fff;"></div>
<svg class="a" style="left:2344px;top:1428.01px" width="17" height="20" viewBox="0 0 17 20"><path d="M8.5 0L12.3 3.4L16.7 4.2V10.5Q16.7 16 8.5 20Q0.3 16 0.3 10.5V4.2L4.7 3.4Z" fill="#fcc200"/></svg>
<div class="t" style="top:1422.62px;font-size:29.4px;line-height:35px;color:#3d82e0;left:2368.8px;">Investieren</div>
<div class="a" style="left:729px;top:1479.31px;width:1831px;height:2px;background:#e6e6e6;"></div>
<div class="flag" style="left:743.2px;top:1512.84px"></div>
<div class="t" style="top:1511.59px;font-size:21.2px;line-height:25px;color:#4a7fde;left:779.6px;">27255745-01</div>
<div class="t" style="top:1511.66px;font-size:21px;line-height:25px;color:#3a3a3a;left:943.6px;">20.12.2019</div>
<div class="t" style="top:1510.95px;font-size:21.6px;line-height:26px;color:#3a3a3a;left:1124.5px;">Verbraucherkredit</div>
<div class="t" style="top:1509.46px;font-size:21px;line-height:25px;color:#3a3a3a;left:1316px;">ID Finance</div>
<div class="t" style="top:1496.26px;font-size:21px;line-height:25px;color:#c4c4c4;right:907px;"><span class="tg">T</span> 767 200 /</div>
<div class="t" style="top:1526.36px;font-size:21px;line-height:25px;color:#3a3a3a;right:907px;"><span class="tg">T</span> 767 200</div>
<div class="t" style="top:1511.86px;font-size:21px;line-height:25px;color:#3a3a3a;right:739.5999999999999px;transform:scaleX(0.92);transform-origin:right top;">19.9%</div>
<div class="t" style="top:1511.86px;font-size:21px;line-height:25px;color:#3a3a3a;right:598px;">20.0%</div>
<div class="t" style="top:1497.06px;font-size:21px;line-height:25px;color:#3a3a3a;right:456px;">12 m. 0 d.</div>
<div class="t" style="top:1526.56px;font-size:21px;line-height:25px;color:#3a3a3a;right:456px;">(0)</div>
<div class="t" style="top:1511.46px;font-size:21px;line-height:25px;color:#3a3a3a;right:272.5px;"><span class="tg">T</span> 659 834.15</div>
<div class="a" style="left:2333.7px;top:1494.6399999999999px;width:212px;height:52.2px;border:2px solid #e4e4e4;border-radius:7px;box-sizing:border-box;background:#fff;"></div>
<svg class="a" style="left:2344px;top:1510.34px" width="17" height="20" viewBox="0 0 17 20"><path d="M8.5 0L12.3 3.4L16.7 4.2V10.5Q16.7 16 8.5 20Q0.3 16 0.3 10.5V4.2L4.7 3.4Z" fill="#fcc200"/></svg>
<div class="t" style="top:1504.95px;font-size:29.4px;line-height:35px;color:#3d82e0;left:2368.8px;">Investieren</div>
<div class="a" style="left:729px;top:1561.6399999999999px;width:1831px;height:2px;background:#e6e6e6;"></div>
<div class="flag" style="left:743.2px;top:1595.17px"></div>
<div class="t" style="top:1593.92px;font-size:21.2px;line-height:25px;color:#4a7fde;left:779.6px;">27255739-01</div>
<div class="t" style="top:1593.99px;font-size:21px;line-height:25px;color:#3a3a3a;left:943.6px;">20.12.2019</div>
<div class="t" style="top:1593.28px;font-size:21.6px;line-height:26px;color:#3a3a3a;left:1124.5px;">Verbraucherkredit</div>
<div class="t" style="top:1591.79px;font-size:21px;line-height:25px;color:#3a3a3a;left:1316px;">ID Finance</div>
<div class="t" style="top:1578.59px;font-size:21px;line-height:25px;color:#c4c4c4;right:907px;"><span class="tg">T</span> 252 080 /</div>
<div class="t" style="top:1608.69px;font-size:21px;line-height:25px;color:#3a3a3a;right:907px;"><span class="tg">T</span> 252 080</div>
<div class="t" style="top:1594.19px;font-size:21px;line-height:25px;color:#3a3a3a;right:739.5999999999999px;transform:scaleX(0.92);transform-origin:right top;">19.9%</div>
<div class="t" style="top:1594.19px;font-size:21px;line-height:25px;color:#3a3a3a;right:598px;">20.0%</div>
<div class="t" style="top:1579.39px;font-size:21px;line-height:25px;color:#3a3a3a;right:456px;">12 m. 0 d.</div>
<div class="t" style="top:1608.89px;font-size:21px;line-height:25px;color:#3a3a3a;right:456px;">(0)</div>
<div class="t" style="top:1593.79px;font-size:21px;line-height:25px;color:#3a3a3a;right:272.5px;"><span class="tg">T</span> 210 270.00</div>
<div class="a" style="left:2333.7px;top:1576.97px;width:212px;height:52.2px;border:2px solid #e4e4e4;border-radius:7px;box-sizing:border-box;background:#fff;"></div>
<svg class="a" style="left:2344px;top:1592.67px" width="17" height="20" viewBox="0 0 17 20"><path d="M8.5 0L12.3 3.4L16.7 4.2V10.5Q16.7 16 8.5 20Q0.3 16 0.3 10.5V4.2L4.7 3.4Z" fill="#fcc200"/></svg>
<div class="t" style="top:1587.28px;font-size:29.4px;line-height:35px;color:#3d82e0;left:2368.8px;">Investieren</div>
<div class="a" style="left:729px;top:1643.97px;width:1831px;height:2px;background:#e6e6e6;"></div>
<div class="a" style="left:2333.6px;top:1495.4px;width:189px;height:80.5px;background:#78c8c6;border-radius:41px;box-shadow:0 1px 4px rgba(0,0,0,0.12);"></div>
<svg class="a" style="left:2371px;top:1517.5px" width="37" height="37" viewBox="0 0 38 38">
<path d="M6.5 34.5L9.5 28A15 15 0 1 1 15.5 32.5Z" fill="none" stroke="#1e5254" stroke-width="5.2" stroke-linejoin="round"/></svg>
<div class="t" style="top:1521.27px;font-size:27.5px;line-height:33px;color:#1e5254;font-weight:700;left:2423px;">Chat</div>
</body></html>
